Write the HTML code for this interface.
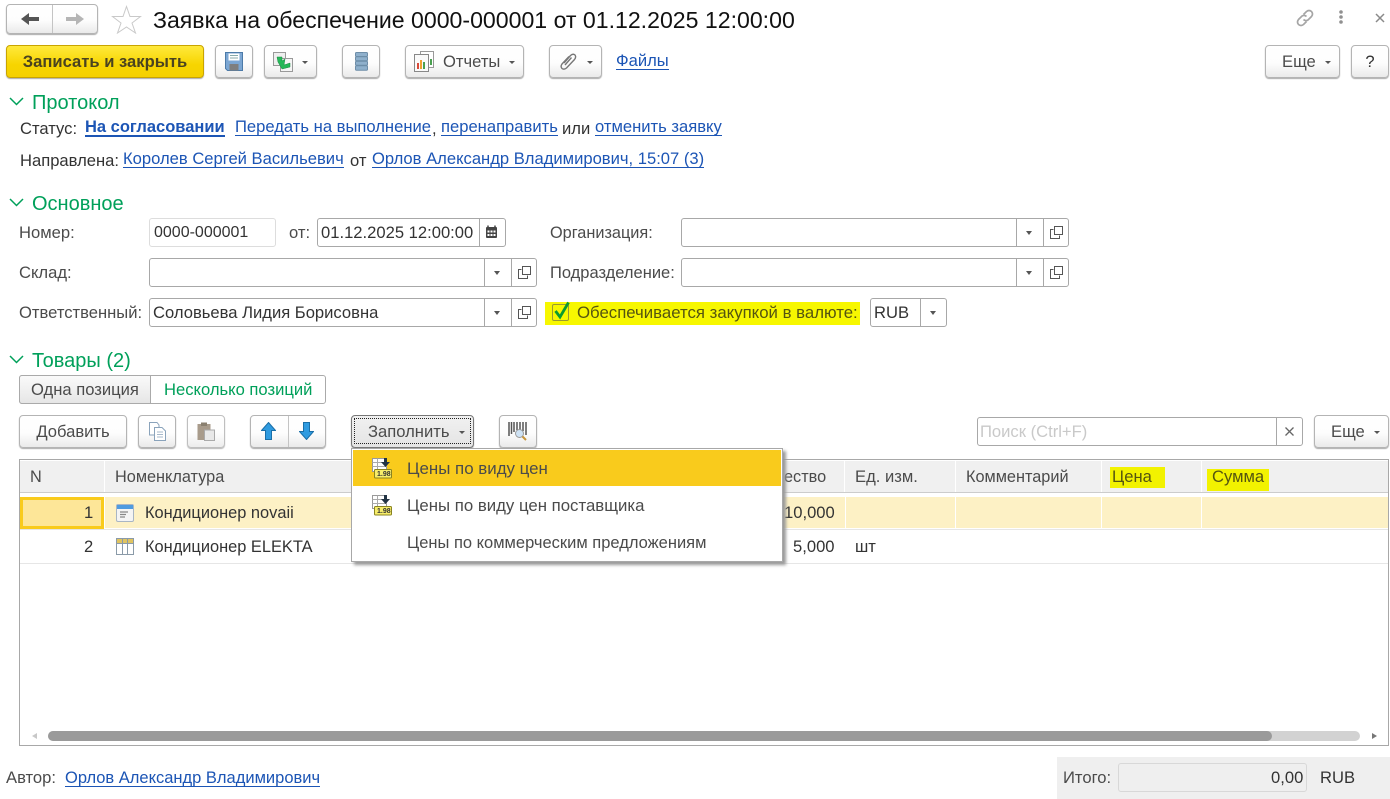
<!DOCTYPE html>
<html lang="ru"><head><meta charset="utf-8"><title>Заявка</title>
<style>
html,body{margin:0;padding:0;background:#fff}
#p{position:relative;width:1390px;height:799px;overflow:hidden;background:#fff;font:16.6px/20px "Liberation Sans",Arial,sans-serif;color:#4b4b4b}
#p div,#p svg,#p a,#p span.a{position:absolute}
.t{white-space:nowrap}
#p .t{margin-top:1px}
a{color:#1c55b5;text-decoration:none;border-bottom:1px solid #1c55b5;line-height:16px;white-space:nowrap}
#p a{margin-top:2px}
.d{color:#333}
.g{color:#00a05a;font-size:20px}
#p .g{margin-top:1px}
.b{box-sizing:border-box;border:1px solid #b4b4b4;border-radius:4px;background:linear-gradient(#fff 0%,#fdfdfd 55%,#eaeaea 100%);box-shadow:0 1px 1px #aaa;height:33px;text-align:center;line-height:32px}
.f{box-sizing:border-box;border:1px solid #a8a8a8;border-radius:3px;background:#fff;height:29px}
.v{top:0;bottom:0;width:1px;background:#a8a8a8}
.tri{width:0;height:0;border-left:3px solid transparent;border-right:3px solid transparent;border-top:3px solid #555}
.h{background:#f0f0f0;top:461px;height:31px}
.hl{background:#f2f200}
</style></head><body><div id="p">

<!-- nav -->
<div class="b" style="left:6px;top:4px;width:92px;height:30px"></div>
<div style="left:52px;top:5px;width:1px;height:28px;background:#c4c4c4"></div>
<svg style="left:20px;top:11px" width="20" height="16"><path d="M1 8L9 2V6H19V10H9V14Z" fill="#555"/></svg>
<svg style="left:65px;top:11px" width="20" height="16"><path d="M19 8L11 2V6H1V10H11V14Z" fill="#b5b5b5"/></svg>
<svg style="left:111px;top:5px" width="31" height="29"><path d="M15.500 1.500L19 11.500H29.500L21 18L24.500 28L15.500 22L6.500 28L10 18L1.500 11.500H12Z" fill="#fff" stroke="#c9c9c9"/></svg>
<div class="t" style="left:153px;top:6px;font-size:23.100px;line-height:28px;color:#111;margin-top:0">Заявка на обеспечение 0000-000001 от 01.12.2025 12:00:00</div>

<svg style="left:1295px;top:8px" width="20" height="20" fill="none" stroke="#a5a5a5" stroke-width="1.700"><path d="M8.500 6.500L11.500 3.500Q14 1.500 16.500 3.500Q18.500 6 16.500 8.500L13 12Q10.500 13.500 8.500 11.500"/><path d="M11.500 13.500L8.500 16.500Q6 18.500 3.500 16.500Q1.500 14 3.500 11.500L7 8Q9.500 6.500 11.500 8.500"/></svg>
<svg style="left:1338px;top:9px" width="6" height="16" fill="#909090"><circle cx="3" cy="3" r="1.800"/><circle cx="3" cy="8" r="1.800"/><circle cx="3" cy="13" r="1.800"/></svg>
<svg style="left:1375px;top:13px" width="10" height="10" stroke="#8a8a8a" stroke-width="1.500"><path d="M1 1L9 9M9 1L1 9"/></svg>

<!-- toolbar -->
<div class="b" style="left:6px;top:45px;width:198px;border-color:#c9a400;background:linear-gradient(#ffe93c,#f7d500 60%,#f5d000);font-weight:bold;color:#4a4320;font-size:16.600px">Записать и закрыть</div>
<div class="b" style="left:215px;top:45px;width:38px"></div>
<svg style="left:225px;top:52px" width="18" height="19"><path d="M.500.500H17.500V18.500H2.500L.500 16.500Z" fill="#7ba6d3" stroke="#4c7aa8"/><rect x="3.500" y="1.500" width="11" height="7" fill="#fff"/><path d="M5 3.500H13M5 6H13" stroke="#8aa"/><rect x="4.500" y="12" width="9" height="6.500" fill="#7e7e7e"/></svg>
<div class="b" style="left:264px;top:45px;width:53px"></div>
<svg style="left:273px;top:52px" width="21" height="20"><rect x=".500" y=".500" width="12" height="13" fill="#eee" stroke="#999"/><rect x="7.500" y="6.500" width="12" height="13" fill="#f5f5f5" stroke="#999"/><path d="M4 5H9V9L12 7L11 13L17 11V15L9 17L5 10Z" fill="#25b858" stroke="#178a40" stroke-width=".500"/></svg>
<div class="tri" style="left:302px;top:61px"></div>
<div class="b" style="left:342px;top:45px;width:38px"></div>
<svg style="left:355px;top:52px" width="13" height="19"><g fill="#8fb0cc" stroke="#6d8da8"><rect x=".500" y=".500" width="12" height="4" rx="1"/><rect x=".500" y="4.800" width="12" height="4" rx="1"/><rect x=".500" y="9.200" width="12" height="4" rx="1"/><rect x=".500" y="13.800" width="12" height="4.500" rx="1"/></g></svg>
<div class="b" style="left:405px;top:45px;width:119px"></div>
<svg style="left:414px;top:51px" width="21" height="21"><rect x="6.500" y=".500" width="13" height="16" fill="#fff" stroke="#999"/><rect x=".500" y="3.500" width="14" height="17" fill="#fafafa" stroke="#888"/><rect x="3" y="12" width="2" height="6" fill="#d84a3a"/><rect x="6" y="9" width="2" height="9" fill="#f0a030"/><rect x="9" y="11" width="2" height="7" fill="#4aa050"/><rect x="16" y="8" width="2" height="6" fill="#4aa050"/></svg>
<div class="t" style="left:443px;top:51px">Отчеты</div>
<div class="tri" style="left:509px;top:61px"></div>
<div class="b" style="left:549px;top:45px;width:53px"></div>
<svg style="left:559px;top:52px" width="18" height="19" fill="none" stroke="#777" stroke-width="1.400"><path d="M5 11L11.500 3.500Q14 1.300 16 3Q17.500 5 15.500 7.500L7.500 16Q5 18 3 16.500Q1.200 14.500 3 12L10 4.500M12.500 5.500L6 13"/></svg>
<div class="tri" style="left:587px;top:61px"></div>
<a class="t" style="left:616px;top:52px">Файлы</a>
<div class="b" style="left:1265px;top:45px;width:75px;text-align:left;padding-left:16px">Еще</div>
<div class="tri" style="left:1325px;top:61px"></div>
<div class="b" style="left:1351px;top:45px;width:38px;color:#333">?</div>

<!-- Protocol -->
<svg style="left:9px;top:97px" width="15" height="9" fill="none" stroke="#00a05a" stroke-width="1.500"><path d="M1 1L7.500 7.500L14 1"/></svg>
<div class="t g" style="left:32px;top:92px">Протокол</div>
<div class="t d" style="left:20px;top:118px">Статус:</div>
<a class="t" style="left:85px;top:118px;font-weight:bold;border-bottom-width:2px;font-size:16.500px">На согласовании</a>
<a class="t" style="left:235px;top:118px">Передать на выполнение</a>
<div class="t d" style="left:432px;top:118px">,</div>
<a class="t" style="left:441px;top:118px">перенаправить</a>
<div class="t d" style="left:562px;top:118px">или</div>
<a class="t" style="left:595px;top:118px">отменить заявку</a>
<div class="t d" style="left:20px;top:150px">Направлена:</div>
<a class="t" style="left:123px;top:150px">Королев Сергей Васильевич</a>
<div class="t d" style="left:350px;top:150px">от</div>
<a class="t" style="left:372px;top:150px">Орлов Александр Владимирович, 15:07 (3)</a>

<!-- Main -->
<svg style="left:9px;top:198px" width="15" height="9" fill="none" stroke="#00a05a" stroke-width="1.500"><path d="M1 1L7.500 7.500L14 1"/></svg>
<div class="t g" style="left:32px;top:193px">Основное</div>

<div class="t" style="left:19px;top:222px">Номер:</div>
<div class="f" style="left:149px;top:218px;width:127px;border-color:#ddd"></div>
<div class="t d" style="left:154px;top:222px;font-size:16px">0000-000001</div>
<div class="t" style="left:289px;top:222px">от:</div>
<div class="f" style="left:317px;top:218px;width:189px"><div class="v" style="left:161px"></div></div>
<div class="t d" style="left:321px;top:222px">01.12.2025 12:00:00</div>
<svg style="left:485px;top:225px" width="13" height="14"><path d="M3 .5V3M10 .5V3" stroke="#444" stroke-width="1.500"/><rect x="1" y="2" width="11" height="11" rx="1" fill="#444"/><g fill="#fff"><rect x="2.500" y="5.500" width="2" height="2"/><rect x="5.500" y="5.500" width="2" height="2"/><rect x="8.500" y="5.500" width="2" height="2"/><rect x="2.500" y="9" width="2" height="2"/><rect x="5.500" y="9" width="2" height="2"/><rect x="8.500" y="9" width="2" height="2"/></g></svg>

<div class="t" style="left:550px;top:222px;font-size:16.300px">Организация:</div>
<div class="f" style="left:681px;top:218px;width:388px"><div class="v" style="left:334px"></div><div class="v" style="left:361px"></div><div class="tri" style="left:344px;top:12px;border-width:4px 3px 0"></div>
<svg style="left:367px;top:6px" width="15" height="15" fill="none" stroke="#555"><path d="M4.500 4.500H1.500V13.500H10.500V10.500"/><rect x="5.500" y="1.500" width="8" height="8"/></svg></div>

<div class="t" style="left:19px;top:262px">Склад:</div>
<div class="f" style="left:149px;top:258px;width:388px"><div class="v" style="left:334px"></div><div class="v" style="left:361px"></div><div class="tri" style="left:344px;top:12px;border-width:4px 3px 0"></div>
<svg style="left:367px;top:6px" width="15" height="15" fill="none" stroke="#555"><path d="M4.500 4.500H1.500V13.500H10.500V10.500"/><rect x="5.500" y="1.500" width="8" height="8"/></svg></div>

<div class="t" style="left:550px;top:262px;font-size:16.500px">Подразделение:</div>
<div class="f" style="left:681px;top:258px;width:388px"><div class="v" style="left:334px"></div><div class="v" style="left:361px"></div><div class="tri" style="left:344px;top:12px;border-width:4px 3px 0"></div>
<svg style="left:367px;top:6px" width="15" height="15" fill="none" stroke="#555"><path d="M4.500 4.500H1.500V13.500H10.500V10.500"/><rect x="5.500" y="1.500" width="8" height="8"/></svg></div>

<div class="t" style="left:19px;top:302px">Ответственный:</div>
<div class="f" style="left:149px;top:298px;width:388px"><div class="v" style="left:334px"></div><div class="v" style="left:361px"></div><div class="tri" style="left:344px;top:12px;border-width:4px 3px 0"></div>
<svg style="left:367px;top:6px" width="15" height="15" fill="none" stroke="#555"><path d="M4.500 4.500H1.500V13.500H10.500V10.500"/><rect x="5.500" y="1.500" width="8" height="8"/></svg></div>
<div class="t d" style="left:153px;top:302px">Соловьева Лидия Борисовна</div>

<div style="left:545px;top:302px;width:315px;height:23px;background:#f7f700"></div>
<div style="left:552px;top:304px;width:15px;height:15px;border:1px solid #9a9a30;border-radius:2px"></div>
<svg style="left:552px;top:300px" width="19" height="20" fill="none" stroke="#0a9a30" stroke-width="2.800"><path d="M3.500 11L8 17L16.500 2.500"/></svg>
<div class="t" style="left:577px;top:302px;color:#555510;font-size:16.800px">Обеспечивается закупкой в валюте:</div>
<div class="f" style="left:870px;top:298px;width:77px"><div class="v" style="left:49px"></div><div class="tri" style="left:59px;top:12px;border-width:4px 3px 0"></div></div>
<div class="t d" style="left:874px;top:302px">RUB</div>

<!-- Goods -->
<svg style="left:9px;top:355px" width="15" height="9" fill="none" stroke="#00a05a" stroke-width="1.500"><path d="M1 1L7.500 7.500L14 1"/></svg>
<div class="t g" style="left:32px;top:350px">Товары (2)</div>
<div class="f" style="left:19px;top:375px;width:307px;height:29px;border-color:#aaa"></div>
<div style="left:19px;top:375px;width:132px;height:29px;box-sizing:border-box;border:1px solid #aaa;border-radius:3px 0 0 3px;background:linear-gradient(#fafafa,#e6e6e6)"></div>
<div class="t" style="left:31px;top:379px">Одна позиция</div>
<div class="t" style="left:164px;top:379px;color:#00a05a">Несколько позиций</div>

<div class="b" style="left:19px;top:415px;width:108px">Добавить</div>
<div class="b" style="left:138px;top:415px;width:38px"></div>
<svg style="left:149px;top:422px" width="17" height="19" fill="#fff" stroke="#8aa3bb"><path d="M.5.5H8L10 3V13H.5Z"/><path d="M5.500 5.500H13L16.500 9V18.500H5.500Z"/><path d="M8 10H14M8 12.500H14M8 15H14" stroke-width=".8"/></svg>
<div class="b" style="left:187px;top:415px;width:38px;opacity:.85"></div>
<svg style="left:197px;top:422px" width="18" height="19"><rect x=".5" y="2" width="13" height="16" fill="#a89b8b"/><rect x="4" y=".5" width="6" height="3.500" fill="#8a8070"/><rect x="7.500" y="8" width="10" height="10.500" fill="#e8e8e8" stroke="#aaa"/></svg>
<div class="b" style="left:250px;top:415px;width:76px"></div>
<div style="left:288px;top:416px;width:1px;height:31px;background:#c4c4c4"></div>
<svg style="left:261px;top:422px" width="15" height="18"><path d="M7.500 .5L14.500 8.500H10.500V17.500H4.500V8.500H.5Z" fill="#2f9be0" stroke="#1a6fa8"/></svg>
<svg style="left:299px;top:422px" width="15" height="18"><path d="M7.500 17.500L14.500 9.500H10.500V.5H4.500V9.500H.5Z" fill="#2f9be0" stroke="#1a6fa8"/></svg>
<div class="b" style="left:351px;top:415px;width:123px;background:linear-gradient(#f1f1f1,#e4e4e4);border-color:#777"></div>
<div style="left:354px;top:418px;width:117px;height:26px;box-sizing:border-box;border:1px dotted #222"></div>
<div class="t" style="left:368px;top:421px">Заполнить</div>
<div class="tri" style="left:459px;top:431px"></div>
<div class="b" style="left:499px;top:415px;width:38px"></div>
<svg style="left:508px;top:421px" width="21" height="21"><path d="M1 1V15M3.500 1V13M6 1V11M9 1V9M12 1V9M15 1V10M18 1V14" stroke="#555" stroke-width="1.500"/><circle cx="11.500" cy="12.500" r="4" fill="#cfe3f5" stroke="#999"/><path d="M14.500 15.500L18 19" stroke="#c8963c" stroke-width="2"/></svg>

<div class="f" style="left:977px;top:417px;width:326px"><div class="v" style="left:298px"></div></div>
<div class="t" style="left:980px;top:421px;color:#c9c9c9">Поиск (Ctrl+F)</div>
<svg style="left:1285px;top:427px" width="9" height="9" stroke="#666" stroke-width="1.300"><path d="M.5.5L8.500 8.500M8.500.5L.5 8.500"/></svg>
<div class="b" style="left:1314px;top:415px;width:75px;text-align:left;padding-left:16px">Еще</div>
<div class="tri" style="left:1374px;top:431px"></div>

<!-- Table -->
<div style="left:19px;top:459px;width:1370px;height:287px;box-sizing:border-box;border:1px solid #a8a8a8"></div>
<div class="h" style="left:20px;width:84px"></div>
<div class="h" style="left:105px;width:665px"></div>
<div class="h" style="left:770px;width:74px"></div>
<div class="h" style="left:845px;width:110px"></div>
<div class="h" style="left:956px;width:145px"></div>
<div class="h" style="left:1102px;width:99px"></div>
<div class="h" style="left:1202px;width:186px"></div>
<div class="t" style="left:30px;top:466px;font-size:16.300px">N</div>
<div class="t" style="left:115px;top:466px;font-size:16.300px">Номенклатура</div>
<div class="t" style="left:784px;top:466px;font-size:16.300px">ество</div>
<div class="t" style="left:855px;top:466px">Ед. изм.</div>
<div class="t" style="left:966px;top:466px;font-size:16.300px">Комментарий</div>
<div class="hl" style="left:1110px;top:467px;width:55px;height:21px"></div>
<div class="t" style="left:1112px;top:466px;color:#555510">Цена</div>
<div class="hl" style="left:1207px;top:469px;width:62px;height:22px"></div>
<div class="t" style="left:1212px;top:466px;color:#555510">Сумма</div>
<div style="left:20px;top:492px;width:1368px;height:1px;background:#ccc"></div>

<div style="left:105px;top:497px;width:1283px;height:31px;background:#fdf1c5"></div>
<div style="left:845px;top:497px;width:1px;height:31px;background:#fff"></div>
<div style="left:955px;top:497px;width:1px;height:31px;background:#fff"></div>
<div style="left:1101px;top:497px;width:1px;height:31px;background:#fff"></div>
<div style="left:1201px;top:497px;width:1px;height:31px;background:#fff"></div>
<div style="left:20px;top:497px;width:84px;height:32px;box-sizing:border-box;border:3px solid #f9cb1c;background:#fde698"></div>
<div class="t d" style="left:84px;top:502px">1</div>
<svg style="left:116px;top:504px" width="18" height="18"><rect x=".5" y=".5" width="17" height="17" rx="1.500" fill="#f4f4f4" stroke="#a9b6c4"/><rect x="1" y="1" width="16" height="4" fill="#4f9be0"/><path d="M4 8H12M4 10.500H10M4 13H9" stroke="#888" stroke-width="1.200"/></svg>
<div class="t d" style="left:145px;top:502px;font-size:16.400px">Кондиционер novaii</div>
<div class="t d" style="left:784px;top:502px">10,000</div>
<div class="t d" style="left:84px;top:536px">2</div>
<svg style="left:116px;top:538px" width="18" height="17"><rect x=".5" y=".5" width="17" height="16" fill="#fff" stroke="#8a9aa8"/><rect x="1" y="1" width="16" height="4" fill="#e0c460"/><path d="M6.500 1V16M11.500 1V16M1 5.500H17" stroke="#8a9aa8"/></svg>
<div class="t d" style="left:145px;top:536px;font-size:16.400px">Кондиционер ELEKTA</div>
<div class="t d" style="left:793px;top:536px">5,000</div>
<div class="t d" style="left:855px;top:536px">шт</div>
<div style="left:20px;top:529px;width:1368px;height:1px;background:#e6e6e6"></div>
<div style="left:20px;top:563px;width:1368px;height:1px;background:#e6e6e6"></div>

<!-- scrollbar -->
<div style="left:48px;top:731px;width:1312px;height:10px;border-radius:5px;background:#d2d2d2"></div>
<div style="left:48px;top:731px;width:1224px;height:10px;border-radius:5px;background:#9a9a9a"></div>
<div style="left:32px;top:733px;width:0;height:0;border:3px solid transparent;border-left:0;border-right:5px solid #c8c8c8"></div>
<div style="left:1372px;top:733px;width:0;height:0;border:3px solid transparent;border-right:0;border-left:5px solid #777"></div>

<!-- popup -->
<div style="left:351px;top:448px;width:432px;height:114px;box-sizing:border-box;border:1px solid #a8a8a8;background:#fff;box-shadow:3px 3px 3px #999"></div>
<div style="left:353px;top:450px;width:428px;height:36px;background:#f9cb1c"></div>
<svg style="left:372px;top:458px" width="21" height="21"><rect x=".5" y=".5" width="14" height="13" fill="#fff" stroke="#999"/><path d="M.5 4.500H14.500M.5 8.500H14.500M5.500.5V13" stroke="#aaa"/><path d="M12 0H15V4H18L13.500 9L9 4H12Z" fill="#234"/><rect x="2.500" y="11.500" width="17" height="8.500" rx="1" fill="#f7ed6a" stroke="#8a8420"/><text x="5" y="18" font-size="7" font-weight="bold" fill="#333" font-family="Liberation Sans">1.98</text></svg>
<div class="t" style="left:407px;top:458px;font-size:16.900px">Цены по виду цен</div>
<svg style="left:372px;top:495px" width="21" height="21"><rect x=".5" y=".5" width="14" height="13" fill="#fff" stroke="#999"/><path d="M.5 4.500H14.500M.5 8.500H14.500M5.500.5V13" stroke="#aaa"/><path d="M12 0H15V4H18L13.500 9L9 4H12Z" fill="#234"/><rect x="2.500" y="11.500" width="17" height="8.500" rx="1" fill="#f7ed6a" stroke="#8a8420"/><text x="5" y="18" font-size="7" font-weight="bold" fill="#333" font-family="Liberation Sans">1.98</text></svg>
<div class="t" style="left:407px;top:495px;font-size:16.800px">Цены по виду цен поставщика</div>
<div class="t" style="left:407px;top:532px;font-size:16.500px">Цены по коммерческим предложениям</div>

<!-- footer -->
<div class="t" style="left:6px;top:767px">Автор:</div>
<a class="t" style="left:65px;top:769px;font-size:16.500px">Орлов Александр Владимирович</a>
<div style="left:1057px;top:757px;width:333px;height:42px;background:#efefef"></div>
<div class="t" style="left:1063px;top:767px">Итого:</div>
<div class="f" style="left:1118px;top:763px;width:189px;background:#efefef;border-color:#d8d8d8"></div>
<div class="t d" style="left:1271px;top:767px">0,00</div>
<div class="t d" style="left:1320px;top:767px">RUB</div>
</div></body></html>
